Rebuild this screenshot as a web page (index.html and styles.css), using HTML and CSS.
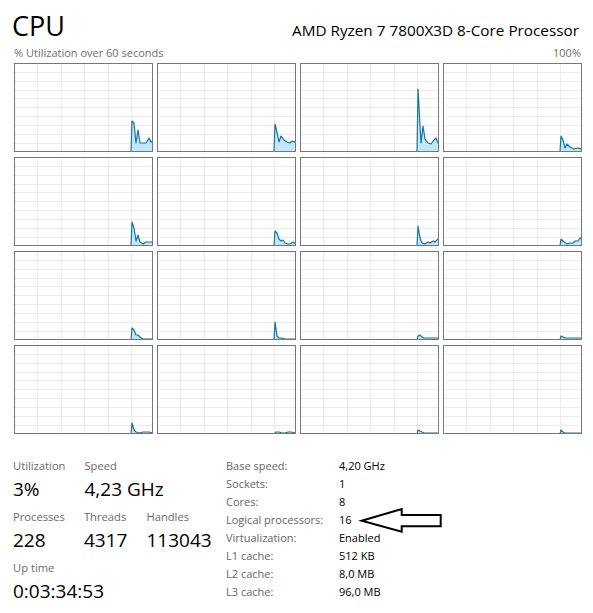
FILE: index.html
```html
<!DOCTYPE html>
<html>
<head>
<meta charset="utf-8">
<link rel="stylesheet" href="styles.css">
</head>
<body>
<svg class="defs" width="0" height="0" aria-hidden="true">
  <defs>
    <g id="grid" class="gridlines">
      <line x1="0" y1="8.5" x2="137" y2="8.5"/>
      <line x1="0" y1="17.5" x2="137" y2="17.5"/>
      <line x1="0" y1="26.5" x2="137" y2="26.5"/>
      <line x1="0" y1="34.5" x2="137" y2="34.5"/>
      <line x1="0" y1="43.5" x2="137" y2="43.5"/>
      <line x1="0" y1="52.5" x2="137" y2="52.5"/>
      <line x1="0" y1="61.5" x2="137" y2="61.5"/>
      <line x1="0" y1="70.5" x2="137" y2="70.5"/>
      <line x1="0" y1="79.5" x2="137" y2="79.5"/>
      <line x1="22.5" y1="0" x2="22.5" y2="87"/>
      <line x1="46.5" y1="0" x2="46.5" y2="87"/>
      <line x1="69.5" y1="0" x2="69.5" y2="87"/>
      <line x1="93.5" y1="0" x2="93.5" y2="87"/>
      <line x1="116.5" y1="0" x2="116.5" y2="87"/>
    </g>
  </defs>
</svg>

<header class="head">
  <h1 class="title">CPU</h1>
  <div class="model">AMD Ryzen 7 7800X3D 8-Core Processor</div>
</header>
<div class="axis"><span>% Utilization over 60 seconds</span><span>100%</span></div>

<div class="graphs">
  <div class="cell"><svg viewBox="0 0 137 87"><use href="#grid"/><path class="load" d="M116,88 L117,57 L119,59 L121,79 L123,66 L125,79 L131,79 L134,74 L136,78 L138,77 L138,88 Z"/></svg></div>
  <div class="cell"><svg viewBox="0 0 137 87"><use href="#grid"/><path class="load" d="M116,88 L117,60 L119,68 L121,78 L123,72 L126,76 L129,78 L132,79 L134,77 L136,78 L138,77 L138,88 Z"/></svg></div>
  <div class="cell"><svg viewBox="0 0 137 87"><use href="#grid"/><path class="load" d="M116,88 L117,25 L120,79 L122,62 L124,75 L127,79 L130,80 L133,76 L135,74 L137,79 L138,79 L138,88 Z"/></svg></div>
  <div class="cell"><svg viewBox="0 0 137 87"><use href="#grid"/><path class="load" d="M116,88 L117,72 L119,76 L121,84 L123,80 L126,83 L130,85 L134,84 L137,85 L138,85 L138,88 Z"/></svg></div>

  <div class="cell"><svg viewBox="0 0 137 87"><use href="#grid"/><path class="load" d="M116,88 L117,64 L119,70 L121,83 L123,77 L125,84 L128,86 L131,84 L134,84 L138,84 L138,88 Z"/></svg></div>
  <div class="cell"><svg viewBox="0 0 137 87"><use href="#grid"/><path class="load" d="M116,88 L117,73 L119,75 L121,81 L123,83 L125,82 L127,85 L130,86 L132,86 L135,84 L138,86 L138,88 Z"/></svg></div>
  <div class="cell"><svg viewBox="0 0 137 87"><use href="#grid"/><path class="load" d="M116,88 L117,68 L119,80 L121,85 L124,86 L127,84 L129,85 L132,83 L134,84 L137,81 L138,82 L138,88 Z"/></svg></div>
  <div class="cell"><svg viewBox="0 0 137 87"><use href="#grid"/><path class="load" d="M116,88 L117,81 L120,84 L123,86 L126,85 L129,85 L131,83 L134,83 L136,80 L138,81 L138,88 Z"/></svg></div>

  <div class="cell"><svg viewBox="0 0 137 87"><use href="#grid"/><path class="load" d="M116,88 L117,76 L119,78 L121,83 L123,83 L125,85 L128,87 L138,87 L138,88 Z"/></svg></div>
  <div class="cell"><svg viewBox="0 0 137 87"><use href="#grid"/><path class="load" d="M116,88 L117,70 L119,84 L121,86 L124,86 L127,87 L138,87 L138,88 Z"/></svg></div>
  <div class="cell"><svg viewBox="0 0 137 87"><use href="#grid"/><path class="load" d="M116,88 L117,84 L119,83 L121,85 L123,86 L138,86 L138,88 Z"/></svg></div>
  <div class="cell"><svg viewBox="0 0 137 87"><use href="#grid"/><path class="load" d="M116,88 L117,84 L119,85 L121,86 L123,86 L138,86 L138,88 Z"/></svg></div>

  <div class="cell"><svg viewBox="0 0 137 87"><use href="#grid"/><path class="load" d="M116,88 L117,77 L119,84 L121,86 L124,87 L128,86 L131,86 L134,86 L138,87 L138,88 Z"/></svg></div>
  <div class="cell"><svg viewBox="0 0 137 87"><use href="#grid"/><path class="load" d="M116,88 L118,86 L121,86 L124,87 L127,87 L130,86 L133,86 L138,87 L138,88 Z"/></svg></div>
  <div class="cell"><svg viewBox="0 0 137 87"><use href="#grid"/><path class="load" d="M116,88 L117,84 L119,85 L121,86 L123,87 L138,87 L138,88 Z"/></svg></div>
  <div class="cell"><svg viewBox="0 0 137 87"><use href="#grid"/><path class="load" d="M116,88 L117,84 L119,86 L121,87 L138,87 L138,88 Z"/></svg></div>
</div>

<section class="stats">
  <div class="dyn">
    <div class="row">
      <div class="stat"><div class="lbl">Utilization</div><div class="val">3%</div></div>
      <div class="stat"><div class="lbl">Speed</div><div class="val">4,23 GHz</div></div>
    </div>
    <div class="row">
      <div class="stat"><div class="lbl">Processes</div><div class="val">228</div></div>
      <div class="stat"><div class="lbl">Threads</div><div class="val">4317</div></div>
      <div class="stat"><div class="lbl">Handles</div><div class="val">113043</div></div>
    </div>
    <div class="row">
      <div class="stat"><div class="lbl">Up time</div><div class="val">0:03:34:53</div></div>
    </div>
  </div>
  <dl class="spec">
    <dt>Base speed:</dt><dd>4,20 GHz</dd>
    <dt>Sockets:</dt><dd>1</dd>
    <dt>Cores:</dt><dd>8</dd>
    <dt>Logical processors:</dt><dd>16</dd>
    <dt>Virtualization:</dt><dd>Enabled</dd>
    <dt>L1 cache:</dt><dd>512 KB</dd>
    <dt>L2 cache:</dt><dd>8,0 MB</dd>
    <dt>L3 cache:</dt><dd>96,0 MB</dd>
  </dl>
</section>

<svg class="arrow" width="86" height="29" viewBox="0 0 86 29">
  <polygon points="3.7,14.7 43.7,3 43.7,9 82.7,9 82.7,20.3 43.7,20.3 43.7,25.7" fill="#fff" stroke="#000" stroke-width="2" stroke-linejoin="miter"/>
</svg>
</body>
</html>
```

FILE: styles.css
```css
html, body {
  margin: 0;
  background: #fff;
}
body {
  position: relative;
  width: 593px;
  height: 613px;
  overflow: hidden;
  font-family: "Open Sans", "Noto Sans", sans-serif;
  color: #000;
}
.defs {
  position: absolute;
  width: 0;
  height: 0;
  overflow: hidden;
}
.gridlines line {
  stroke: #ebebeb;
  stroke-width: 1;
  shape-rendering: crispEdges;
}
.head {
  display: flex;
  justify-content: space-between;
  align-items: baseline;
  height: 36px;
  padding: 8px 14px 0 12px;
}
.title {
  margin: 0;
  font-size: 27px;
  font-weight: 400;
  line-height: 36px;
}
.model {
  font-size: 15.3px;
  line-height: 22px;
}
.axis {
  display: flex;
  justify-content: space-between;
  margin-top: 1px;
  padding: 0 12px 0 14px;
  font-size: 11px;
  line-height: 16px;
  color: #707070;
}
.graphs {
  display: grid;
  grid-template-columns: repeat(4, 139px);
  grid-auto-rows: 89px;
  column-gap: 4px;
  row-gap: 5px;
  margin: 2px 0 0 14px;
}
.cell {
  border: 1px solid #777;
  background: #fff;
}
.cell svg {
  display: block;
  width: 137px;
  height: 87px;
  overflow: hidden;
}
.load {
  fill: #c3e7f7;
  stroke: #17759f;
  stroke-width: 1.2;
  stroke-linejoin: round;
}
.stats {
  display: flex;
  margin-top: 23px;
}
.dyn {
  width: 226px;
  box-sizing: border-box;
  padding: 1px 0 0 13px;
}
.row {
  display: flex;
  gap: 19px;
  margin-bottom: 7px;
}
.lbl {
  font-size: 11.2px;
  line-height: 16px;
  color: #6b6b6b;
  margin-bottom: 2px;
}
.val {
  font-size: 19px;
  line-height: 26px;
}
.spec {
  margin: 0;
  display: grid;
  grid-template-columns: 113px auto;
  grid-auto-rows: 18px;
  font-size: 11px;
  line-height: 18px;
}
.spec dt {
  color: #666;
}
.spec dd {
  margin: 0;
}
.arrow {
  position: absolute;
  left: 358px;
  top: 506px;
}
```
